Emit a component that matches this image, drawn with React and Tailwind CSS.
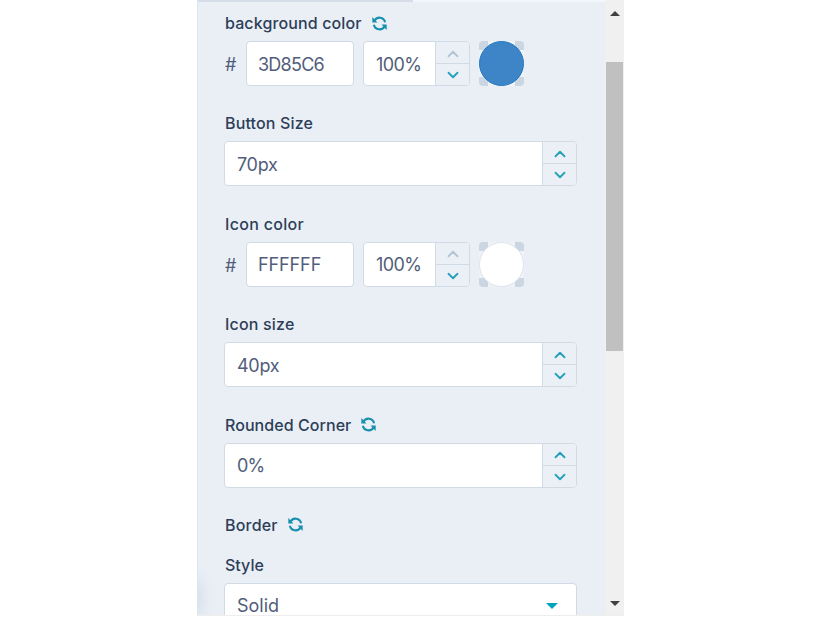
import { ChevronDown, ChevronUp } from 'lucide-react';

function RefreshIcon() {
  return (
    <svg viewBox="0 0 15 15" className="h-[15px] w-[15px] shrink-0" fill="none" stroke="#1790ae" strokeWidth="2.1">
      <path d="M2.4 4.8A5.7 5.7 0 0 1 13.1 6.2" />
      <path d="M12.6 10.2A5.7 5.7 0 0 1 1.9 8.8" />
      <path d="M0.3 1V6.4H5.4Z" fill="#1790ae" stroke="none" />
      <path d="M14.7 14V8.6H9.6Z" fill="#1790ae" stroke="none" />
    </svg>
  );
}

function Label({ text, className, refresh }) {
  return (
    <div className="flex h-7 items-center gap-[10px] pl-px text-base font-medium text-[#2d3e58]">
      <span className={`whitespace-nowrap ${className}`}>{text}</span>
      {refresh && <RefreshIcon />}
    </div>
  );
}

function Stepper({ upDisabled }) {
  return (
    <div className="flex w-[34px] shrink-0 flex-col border-l border-[#d0dbe6] bg-[#eaf0f6]">
      <div className="flex h-[22px] items-center justify-center border-b border-[#d0dbe6] pt-[2px]">
        <ChevronUp size={18} strokeWidth={2.4} className={upDisabled ? 'text-[#b3c3d5]' : 'text-[#259fbc]'} />
      </div>
      <div className="flex flex-1 items-center justify-center pt-px">
        <ChevronDown size={18} strokeWidth={2.4} className="text-[#259fbc]" />
      </div>
    </div>
  );
}

function NumberField({ value, textClass, width, upDisabled }) {
  return (
    <div className={`flex h-[45px] overflow-hidden rounded-[4px] border border-[#d0dbe6] bg-white ${width}`}>
      <div className="flex flex-1 items-center pl-3 pt-[2px] text-lg">
        <span className={textClass}>{value}</span>
      </div>
      <Stepper upDisabled={upDisabled} />
    </div>
  );
}

function Swatch({ fill }) {
  return (
    <div className="relative ml-[9px] h-[45px] w-[45px] overflow-hidden rounded-[4px] bg-[#f0f3f6]">
      <div className="grid h-full grid-cols-[9px_9px] grid-rows-[9px_9px] content-between justify-between">
        <i className="bg-[#cbd6e2]" />
        <i className="bg-[#cbd6e2]" />
        <i className="bg-[#cbd6e2]" />
        <i className="bg-[#cbd6e2]" />
      </div>
      <div className={`absolute inset-0 rounded-full border ${fill}`} />
    </div>
  );
}

function ColorRow({ hex, hexClass, fill }) {
  return (
    <div className="mt-1 flex items-center">
      <span className="w-[22px] pl-px pt-[3px] text-lg">#</span>
      <div className="flex h-[45px] w-[108px] items-center rounded-[4px] border border-[#d0dbe6] bg-white pl-[11px] pt-[2px] text-lg">
        <span className={hexClass}>{hex}</span>
      </div>
      <div className="ml-[9px]">
        <NumberField value="100%" textClass="tracking-[-0.6px]" width="w-[107px]" upDisabled />
      </div>
      <Swatch fill={fill} />
    </div>
  );
}

function SizeSection({ label, labelClass, value, valueClass, refresh }) {
  return (
    <section className="h-[100.4px]">
      <Label text={label} className={labelClass} refresh={refresh} />
      <div className="mt-1">
        <NumberField value={value} textClass={valueClass} width="w-[353px]" />
      </div>
    </section>
  );
}

export default function App() {
  return (
    <main className="h-[617px] w-[822px] overflow-hidden bg-white pl-[197px] font-['Inter',sans-serif]">
      <div className="flex h-[616px] w-[427px] flex-col overflow-hidden border-b border-[#eeeeee]">
        <div className="flex min-h-0 flex-1">
          <div className="relative flex w-[408px] flex-col overflow-hidden border-l border-[#e0e6ee] bg-[#eaeff6] text-[#515d7a]">
            <div className="flex h-[2px] shrink-0 bg-[#f3f6fa]">
              <div className="w-[215px] bg-[#d5dee8]" />
            </div>
            {/* shadow cast by the floating button beside the panel */}
            <div className="absolute -left-5 bottom-0 h-9 w-5 rounded-full shadow-[0_0_16px_2px_#cdd8e2]" />
            <div className="pl-[26px] pt-[7px]">
              <section className="h-[100.4px]">
                <Label text="background color" className="tracking-[0.12px]" refresh />
                <ColorRow hex="3D85C6" hexClass="tracking-[-0.75px]" fill="border-[#1f78c1] bg-[#3d85c6]" />
              </section>
              <SizeSection label="Button Size" labelClass="tracking-[0.15px]" value="70px" valueClass="tracking-[-0.3px]" />
              <section className="h-[100.4px]">
                <Label text="Icon color" className="tracking-[0.3px]" />
                <ColorRow hex="FFFFFF" hexClass="tracking-[-0.1px]" fill="border-[#dce4ed] bg-white" />
              </section>
              <SizeSection label="Icon size" labelClass="tracking-[0.18px]" value="40px" valueClass="tracking-[-0.3px]" />
              <SizeSection label="Rounded Corner" labelClass="tracking-[0.06px]" value="0%" valueClass="tracking-[-0.8px]" refresh />
              <Label text="Border" className="tracking-[0.2px]" refresh />
              <div className="mt-3">
                <Label text="Style" className="" />
                <div className="mt-1 flex h-[45px] w-[353px] items-center justify-between rounded-[4px] border border-[#d0dbe6] bg-white pl-3 pr-[18px] pt-[2px] text-lg">
                  <span>Solid</span>
                  <svg viewBox="0 0 12 6" className="h-[6px] w-3" fill="#00a4bd">
                    <path d="M0 0H12L6 6Z" />
                  </svg>
                </div>
              </div>
            </div>
          </div>
          <div className="flex w-[19px] flex-col items-end bg-[#f0f0f0] pr-px">
            <div className="flex h-[62px] w-[17px] justify-center pt-[11px]">
              <svg viewBox="0 0 10 5" className="h-[5px] w-[10px]" fill="#404040">
                <path d="M0 5L5 0L10 5Z" />
              </svg>
            </div>
            <div className="h-[289px] w-[17px] bg-[#c0c0c0]" />
            <div className="flex w-[17px] flex-1 items-end justify-center pb-[9px]">
              <svg viewBox="0 0 10 5" className="h-[5px] w-[10px]" fill="#404040">
                <path d="M0 0H10L5 5Z" />
              </svg>
            </div>
          </div>
        </div>
      </div>
    </main>
  );
}
